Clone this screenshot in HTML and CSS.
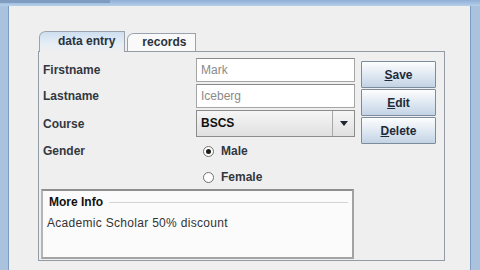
FILE: index.html
```html
<!DOCTYPE html>
<html lang="en">
<head>
    <meta charset="UTF-8">
    <title>Student Form</title>
    <link rel="stylesheet" href="styles.css">
</head>
<body>
    <div class="window">
        <div class="titlebar"><span class="caption"></span></div>
        <div class="client">
            <div class="tabs">
                <div class="tab active">data entry</div>
                <div class="tab">records</div>
            </div>
            <div class="tab-panel">
                <div class="form">
                    <div class="grid">
                        <div class="label">Firstname</div>
                        <div class="field text">Mark</div>

                        <div class="label">Lastname</div>
                        <div class="field text">Iceberg</div>

                        <div class="label">Course</div>
                        <div class="field combo">
                            <span class="combo-value">BSCS</span>
                            <span class="combo-arrow"><span class="tri"></span></span>
                        </div>

                        <div class="label">Gender</div>
                        <div class="radio"><span class="dot checked"></span>Male</div>

                        <div class="label"></div>
                        <div class="radio"><span class="dot"></span>Female</div>
                    </div>
                    <div class="more-info">
                        <div class="more-title"><span>More Info</span><span class="title-line"></span></div>
                        <div class="more-text">Academic Scholar 50% discount</div>
                    </div>
                </div>
                <div class="buttons">
                    <button type="button"><u>S</u>ave</button>
                    <button type="button"><u>E</u>dit</button>
                    <button type="button"><u>D</u>elete</button>
                </div>
            </div>
        </div>
    </div>
</body>
</html>
```

FILE: styles.css
```css
body {
    margin: 0;
    width: 480px;
    height: 270px;
    overflow: hidden;
    font-family: "Liberation Sans", Arial, sans-serif;
    font-size: 12px;
}

.window {
    width: 480px;
    height: 270px;
    display: flex;
    flex-direction: column;
    background: #a9c3df;
}

.titlebar {
    height: 6px;
    background: linear-gradient(#8eafd6, #b7cfe9);
    display: flex;
}

.caption {
    width: 110px;
    height: 3px;
    background: #7f9bbf;
}

.client {
    flex: 1;
    margin-left: 8px;
    margin-right: 9px;
    border-left: 1px solid #7e9cc0;
    border-right: 1px solid #7e9cc0;
    background: #efefef;
    padding: 25px 0 0 29px;
}

.tabs {
    display: flex;
    align-items: flex-end;
    height: 20px;
    margin-left: 1px;
}

.tab {
    height: 17px;
    padding: 0 9px 0 14px;
    border: 1px solid #9aa3ad;
    border-bottom: none;
    border-top-left-radius: 7px 6px;
    background: #f9f9f9;
    font-weight: bold;
    color: #2a323c;
    line-height: 17px;
    margin-right: 2px;
}

.tab.active {
    padding: 0 9px 0 18px;
    line-height: 19px;
    background: linear-gradient(#cfdff0, #e6eef6 60%, #eeeeee);
    position: relative;
    z-index: 1;
    margin-bottom: -1px;
    height: 20px;
}

.tab-panel {
    width: 405px;
    height: 208px;
    border: 1px solid #939ca6;
    display: flex;
}

.form {
    width: 317px;
    display: flex;
    flex-direction: column;
}

.grid {
    display: grid;
    grid-template-columns: 157px 159px;
    grid-template-rows: 24px 24px 27px 24px 24px;
    row-gap: 2px;
    padding-top: 6px;
    height: 137px;
    box-sizing: border-box;
}

.label {
    align-self: center;
    padding-left: 4px;
    font-weight: bold;
    color: #333840;
}

.field {
    box-sizing: border-box;
    border: 1px solid #a5a5a5;
    border-top-color: #8a8a8a;
}

.text {
    background: #fff;
    color: #8a8a8a;
    padding-left: 4px;
    line-height: 22px;
}

.combo {
    display: flex;
    background: linear-gradient(#f6f6f6, #e0e0e0);
    border-color: #8c8c8c;
}

.combo-value {
    flex: 1;
    padding-left: 4px;
    line-height: 25px;
    font-weight: bold;
    color: #111;
}

.combo-arrow {
    width: 21px;
    border-left: 1px solid #a8a8a8;
    display: flex;
    align-items: center;
    justify-content: center;
}

.tri {
    width: 0;
    height: 0;
    border-left: 4px solid transparent;
    border-right: 4px solid transparent;
    border-top: 5px solid #1f2630;
}

.radio {
    display: flex;
    align-items: center;
    padding-left: 7px;
    font-weight: bold;
    color: #333840;
}

.dot {
    width: 9px;
    height: 9px;
    border: 1px solid #6f6f6f;
    border-radius: 50%;
    background: #fff;
    margin-right: 7px;
    display: flex;
    align-items: center;
    justify-content: center;
}

.dot.checked::after {
    content: "";
    width: 5px;
    height: 5px;
    border-radius: 50%;
    background: #1c1c1c;
}

.more-info {
    margin-left: 2px;
    width: 313px;
    height: 70px;
    box-sizing: border-box;
    border: 2px solid #a3a3a3;
    border-top-color: #8e8e8e;
    border-left-color: #b5b5b5;
    background: #fbfbfb;
    padding: 3px 4px 0 4px;
}

.more-title {
    display: flex;
    align-items: center;
    padding-left: 2px;
    height: 16px;
    font-weight: bold;
    color: #111;
}

.title-line {
    flex: 1;
    height: 1px;
    margin-left: 6px;
    background: #d4d4d4;
}

.more-text {
    margin-top: 6px;
    color: #333;
    letter-spacing: 0.3px;
}

.buttons {
    display: flex;
    flex-direction: column;
    gap: 1px;
    margin-left: 5px;
    padding-top: 9px;
}

button {
    width: 75px;
    height: 27px;
    border: 1px solid #7d8c9c;
    border-radius: 1px;
    background: linear-gradient(#fdfdfd, #dde7f1 55%, #c3d3e4);
    font-family: "Liberation Sans", Arial, sans-serif;
    font-size: 12px;
    font-weight: bold;
    color: #1d2b3b;
    padding: 0;
}
```
